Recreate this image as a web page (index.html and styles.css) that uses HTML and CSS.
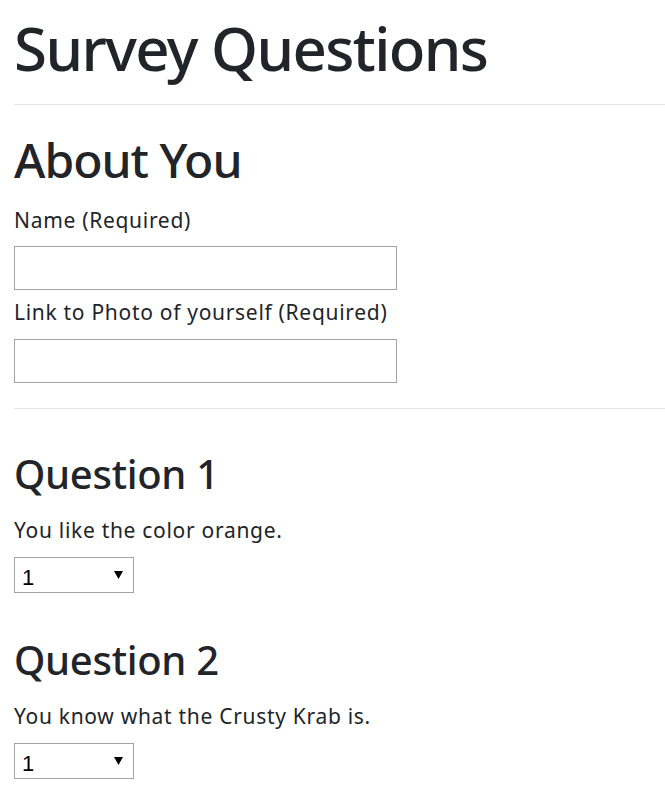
FILE: index.html
```html
<!DOCTYPE html>
<html lang="en">
<head>
<meta charset="utf-8">
<title>Survey Questions</title>
<link rel="stylesheet" href="styles.css">
</head>
<body>
<main class="page">
  <h1 class="title">Survey Questions</h1>
  <hr class="rule">
  <section class="about">
    <h2 class="section-title">About You</h2>
    <label class="label" for="name">Name (Required)</label>
    <input class="text-input" id="name" type="text">
    <label class="label label-second" for="photo">Link to Photo of yourself (Required)</label>
    <input class="text-input text-input-second" id="photo" type="text">
  </section>
  <hr class="rule rule-second">
  <section class="question q1">
    <h3 class="question-title">Question 1</h3>
    <p class="question-text">You like the color orange.</p>
    <select class="choice">
      <option>1</option><option>2</option><option>3</option><option>4</option><option>5</option>
    </select>
  </section>
  <section class="question q2">
    <h3 class="question-title">Question 2</h3>
    <p class="question-text">You know what the Crusty Krab is.</p>
    <select class="choice">
      <option>1</option><option>2</option><option>3</option><option>4</option><option>5</option>
    </select>
  </section>
</main>
</body>
</html>
```

FILE: styles.css
```css
html, body {
  margin: 0;
  padding: 0;
  background: #fff;
}

body {
  font-family: "Noto Sans", "Open Sans", sans-serif;
  color: #212529;
  font-size: 21px;
  line-height: 1.5;
  overflow: hidden;
}

.page {
  padding: 0 0 0 14px;
}

.title {
  font-size: 60px;
  font-weight: 500;
  letter-spacing: -1.6px;
  line-height: 72px;
  margin: 12px 0 0;
}

.rule {
  border: 0;
  border-top: 1px solid #e6e6e6;
  margin: 20px 0 0;
  height: 0;
}

.section-title {
  font-size: 48px;
  font-weight: 500;
  letter-spacing: -1px;
  line-height: 58px;
  margin: 26px 0 0;
}

.label {
  display: block;
  font-size: 21px;
  letter-spacing: 0.7px;
  line-height: 30px;
  margin: 16px 0 0;
}

.label-second {
  margin-top: 7px;
}

.text-input {
  display: block;
  box-sizing: border-box;
  width: 383px;
  height: 44px;
  margin: 11px 0 0;
  border: 1px solid #a3a3a3;
  border-radius: 0;
  padding: 0 8px;
  font: inherit;
  background: #fff;
}

.text-input-second {
  margin-top: 12px;
}

.rule-second {
  margin-top: 25px;
}

.question-title {
  font-size: 40px;
  font-weight: 500;
  letter-spacing: -0.3px;
  line-height: 48px;
  margin: 41px 0 0;
}

.question-text {
  margin: 17px 0 0;
  font-size: 21px;
  letter-spacing: 0.7px;
  line-height: 30px;
}

.choice {
  display: block;
  box-sizing: border-box;
  width: 120px;
  height: 36px;
  margin: 12px 0 0;
  border: 1px solid #a3a3a3;
  border-radius: 0;
  padding: 6px 0 0 7px;
  font-family: "Liberation Sans", Arial, sans-serif;
  font-size: 22px;
  line-height: 28px;
  color: #000;
  background: #fff url("data:image/svg+xml;utf8,<svg xmlns='http://www.w3.org/2000/svg' width='9' height='8'><path d='M0 0H9L4.5 8Z' fill='black'/></svg>") no-repeat right 10px center;
  -webkit-appearance: none;
  appearance: none;
}

.q2 .question-title {
  margin-top: 43px;
}
```
